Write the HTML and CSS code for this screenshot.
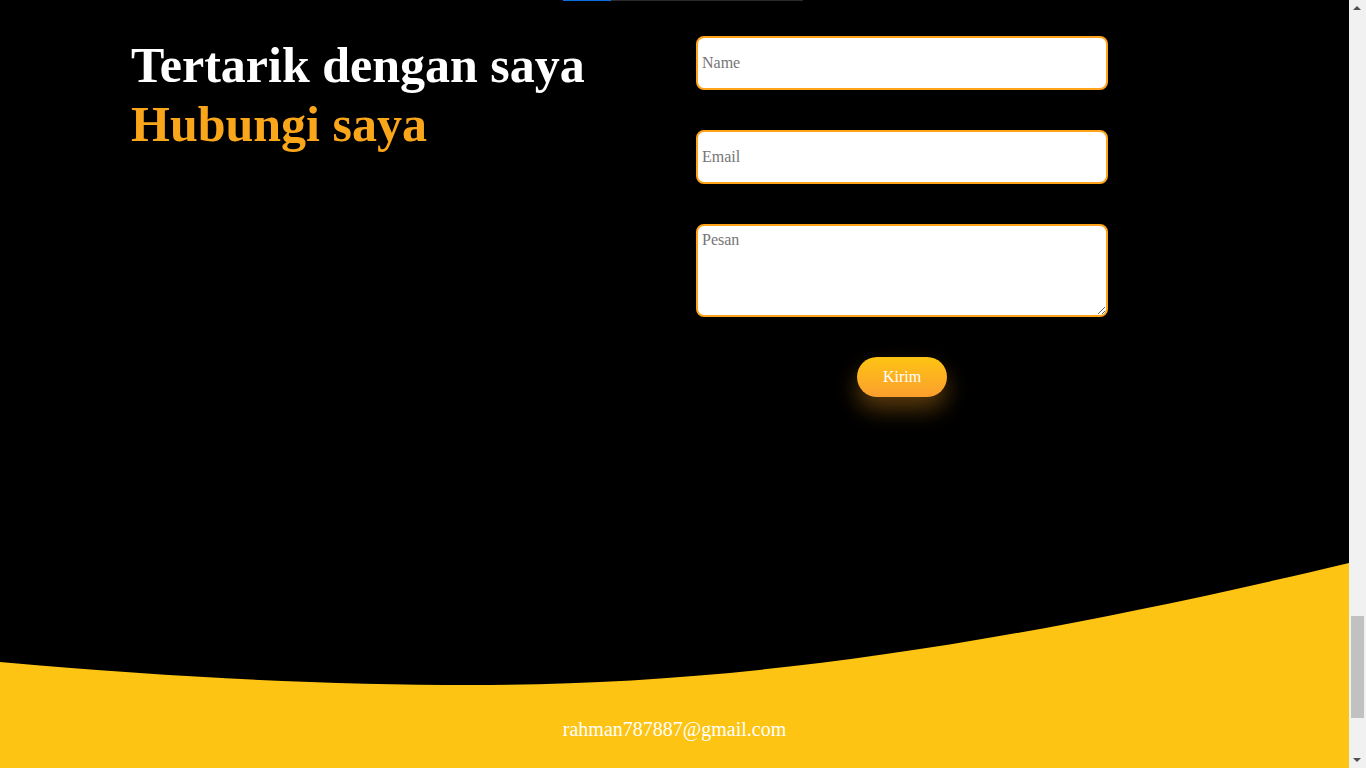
FILE: index.html
```html
<!DOCTYPE html>
<html lang="id">

<head>
    <meta charset="UTF-8">
    <meta name="viewport" content="width=device-width, initial-scale=1.0">
    <title>Kontak</title>
    <link rel="stylesheet" href="styles.css">
</head>

<body>

    <div class="page">
        <div class="progress">
            <div class="progress-bar"></div>
        </div>

        <section id="contact">
            <div class="contact-title">
                <h1>Tertarik dengan saya<br><span>Hubungi saya</span></h1>
            </div>
            <form class="contact-form">
                <input type="text" name="name" placeholder="Name">
                <input type="email" name="email" placeholder="Email">
                <textarea name="pesan" placeholder="Pesan"></textarea>
                <button type="submit">Kirim</button>
            </form>
        </section>

        <footer>
            <svg class="wave" viewBox="0 0 1349 205" preserveAspectRatio="none">
                <path d="M0,99 C180,115 330,122 470,122 C700,122 950,95 1349,0 L1349,205 L0,205 Z" fill="#fdc413"></path>
            </svg>
            <div class="footer-text">
                <p>rahman787887@gmail.com</p>
            </div>
        </footer>
    </div>

    <!-- scrollbar of the window, page is scrolled to the bottom -->
    <div class="scrollbar">
        <span class="arrow up"></span>
        <span class="thumb"></span>
        <span class="arrow down"></span>
    </div>

</body>

</html>
```

FILE: styles.css
```css
body {
    margin: 0;
    padding: 0;
    background-color: #000;
    font-family: 'Liberation Serif', 'Times New Roman', serif;
    overflow: hidden;
}

.page {
    width: calc(100% - 17px);
    height: 768px;
    display: flex;
    flex-direction: column;
}

.progress {
    height: 1px;
    padding-left: 563px;
}

.progress-bar {
    width: 240px;
    height: 1px;
    background-color: #2b2b2b;
    background-image: linear-gradient(to right, #0a6fe0 48px, transparent 48px);
}

#contact {
    display: grid;
    grid-template-columns: 565px 412px;
    padding: 35px 0 0 131px;
    flex: 1;
}

.contact-title h1 {
    margin: 0;
    font-size: 50px;
    line-height: 59px;
    font-weight: bold;
    color: #fff;
}

.contact-title h1 span {
    color: #faa61a;
}

.contact-form {
    display: flex;
    flex-direction: column;
    gap: 40px;
}

.contact-form input,
.contact-form textarea {
    font-family: inherit;
    font-size: 16px;
    border: 2px solid #ffa31a;
    border-radius: 8px;
    padding: 0 4px;
    box-sizing: border-box;
    width: 100%;
    background-color: #fff;
    outline: none;
}

.contact-form input {
    height: 54px;
}

.contact-form textarea {
    height: 93px;
    padding-top: 5px;
}

.contact-form ::placeholder {
    color: #757575;
}

.contact-form button {
    align-self: center;
    width: 90px;
    height: 40px;
    border: none;
    border-radius: 20px;
    background: linear-gradient(to bottom, #fdc413, #fc9f2e);
    color: #fff;
    font-family: inherit;
    font-size: 16px;
    box-shadow: 0 12px 22px rgba(252, 164, 32, 0.35);
    cursor: pointer;
}

footer {
    position: relative;
    height: 205px;
}

.wave {
    position: absolute;
    top: 0;
    left: 0;
    width: 100%;
    height: 100%;
    display: block;
}

.footer-text {
    position: relative;
    padding-top: 155px;
    text-align: center;
}

.footer-text p {
    margin: 0;
    color: #fff;
    font-size: 20px;
}

.scrollbar {
    position: fixed;
    top: 0;
    right: 0;
    width: 17px;
    height: 100%;
    background-color: #f1f1f1;
}

.thumb {
    position: absolute;
    top: 616px;
    left: 2px;
    width: 13px;
    height: 102px;
    background-color: #c1c1c1;
}

.arrow {
    position: absolute;
    left: 4px;
    width: 0;
    height: 0;
    border-left: 4.5px solid transparent;
    border-right: 4.5px solid transparent;
}

.arrow.up {
    top: 6px;
    border-bottom: 4.5px solid #505050;
}

.arrow.down {
    bottom: 6px;
    border-top: 4.5px solid #505050;
}
```
